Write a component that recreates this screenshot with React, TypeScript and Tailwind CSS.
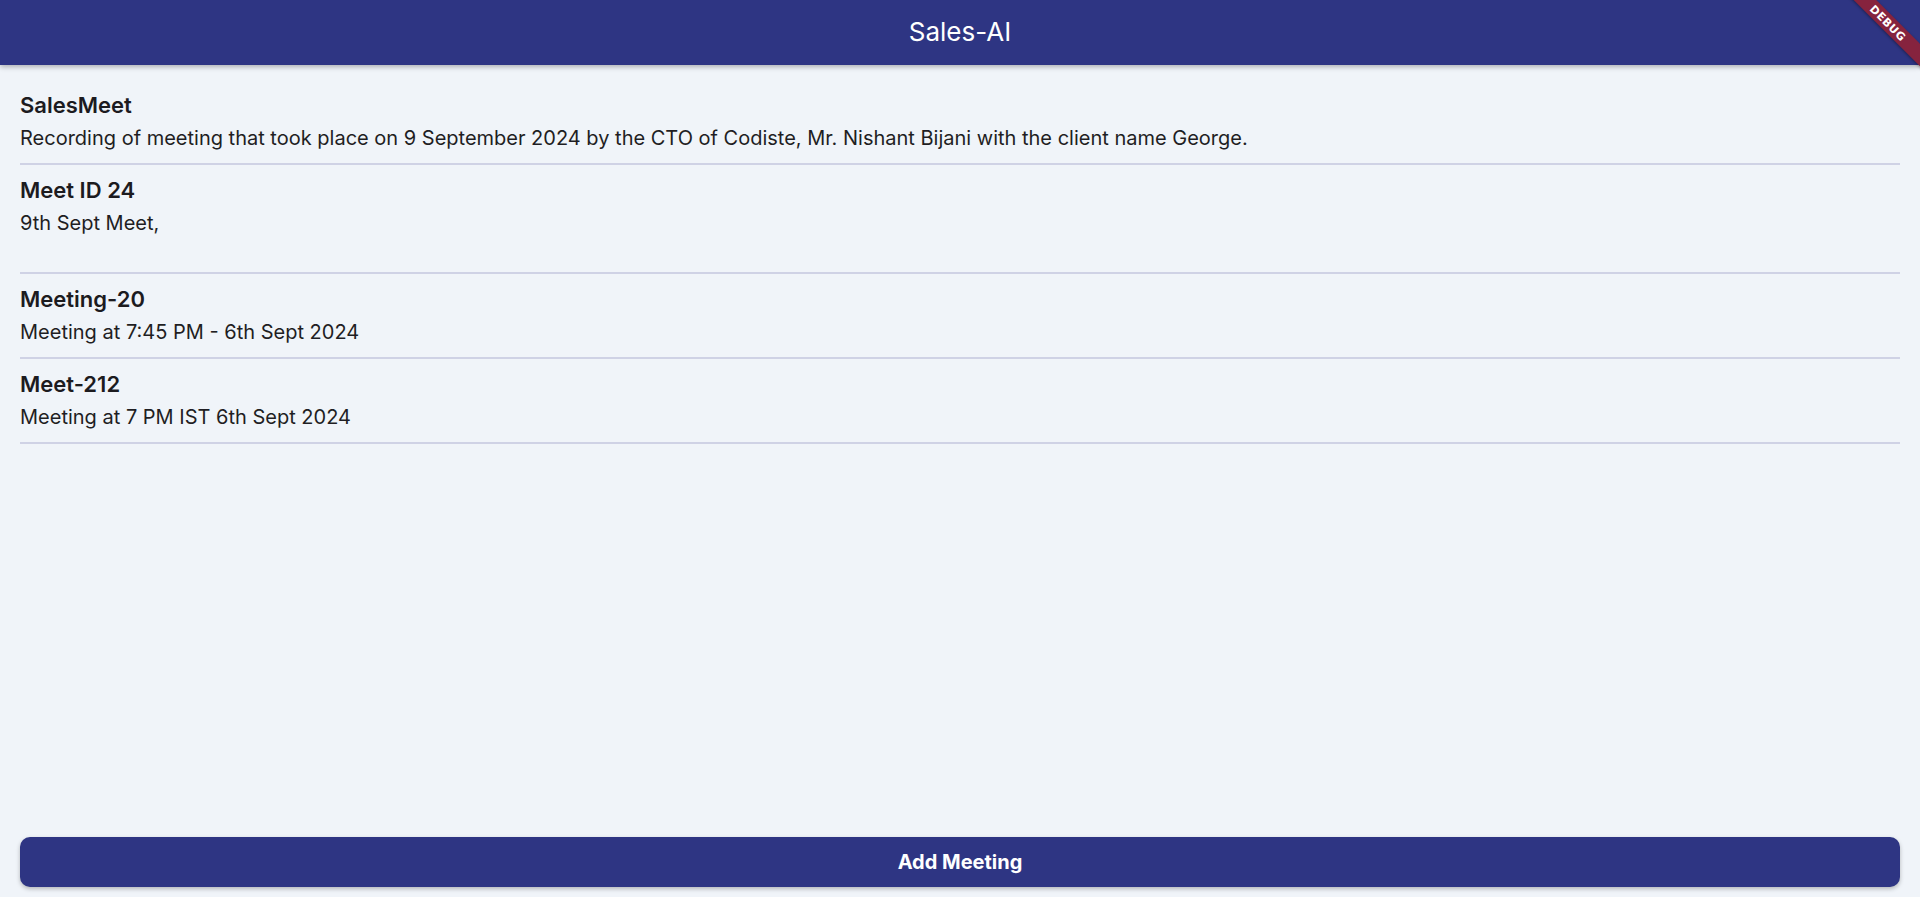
import React from 'react';

const meetings = [
  {
    id: 1,
    title: "SalesMeet",
    description: "Recording of meeting that took place on 9 September 2024 by the CTO of Codiste, Mr. Nishant Bijani with the client name George.",
  },
  {
    id: 2,
    title: "Meet ID 24",
    description: "9th Sept Meet,\n",
  },
  {
    id: 3,
    title: "Meeting-20",
    description: "Meeting at 7:45 PM - 6th Sept 2024",
  },
  {
    id: 4,
    title: "Meet-212",
    description: "Meeting at 7 PM IST 6th Sept 2024",
  },
];

const App = () => {
  return (
    <div className="relative flex h-screen flex-col overflow-hidden bg-[#f0f4f9] font-['Inter',sans-serif] text-[#1c1b1f]">
      {/* App bar */}
      <header className="relative z-10 flex h-[65px] shrink-0 items-center justify-center bg-[#2e3583] shadow-[0_2px_5px_rgba(0,0,0,0.28)]">
        <h1 className="pb-[2px] text-[26px] font-normal text-white">Sales-AI</h1>
      </header>

      {/* Debug banner */}
      <div className="pointer-events-none absolute right-0 top-0 z-20 h-[80px] w-[80px] overflow-hidden">
        <div className="absolute left-[-12px] top-[15px] flex h-[16px] w-[120px] rotate-45 items-center justify-center bg-[#86233e] shadow-[0_1px_3px_rgba(0,0,0,0.35)]">
          <span className="font-['DejaVu_Sans',sans-serif] text-[11px] font-bold leading-none tracking-[0.5px] text-white">DEBUG</span>
        </div>
      </div>

      {/* Meeting list */}
      <main className="flex-1 overflow-y-auto px-5 pt-[15px]">
        {meetings.map((meeting) => (
          <div key={meeting.id} className="border-b-2 border-[#cfd2e5] pb-[13px] pt-[10px]">
            <h2 className="text-[22px] font-semibold leading-[30px]">{meeting.title}</h2>
            <div className="mt-[6px] text-[20px] leading-[24px] text-[#1f1e23]">
              {meeting.description.split("\n").map((line, i) => (
                <p key={i} className="min-h-[24px]">{line}</p>
              ))}
            </div>
          </div>
        ))}
      </main>

      {/* Add button */}
      <div className="shrink-0 px-5 pb-[10px]">
        <button className="flex h-[50px] w-full items-center justify-center rounded-[10px] bg-[#2e3583] text-[20px] font-bold text-white shadow-[0_2px_4px_rgba(0,0,0,0.25)]">
          Add Meeting
        </button>
      </div>
    </div>
  );
};

export default App;
